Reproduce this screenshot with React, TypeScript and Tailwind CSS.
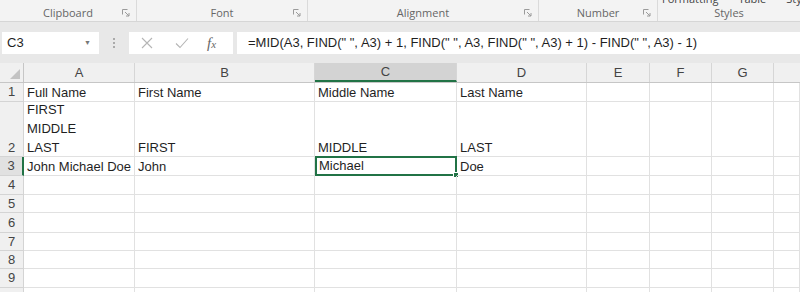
import React from "react";

const cols = [
  { key: "A", w: 111 },
  { key: "B", w: 180 },
  { key: "C", w: 142 },
  { key: "D", w: 130 },
  { key: "E", w: 63 },
  { key: "F", w: 62 },
  { key: "G", w: 62 },
  { key: "H", w: 26 },
];

const rows: { n: string; h: string; cells: Record<string, React.ReactNode> }[] = [
  { n: "1", h: "h-[19px]", cells: { A: "Full Name", B: "First Name", C: "Middle Name", D: "Last Name" } },
  {
    n: "2",
    h: "h-[55px]",
    cells: {
      A: (
        <span className="flex flex-col gap-[3px]">
          <span>FIRST</span>
          <span>MIDDLE</span>
          <span>LAST</span>
        </span>
      ),
      B: "FIRST",
      C: "MIDDLE",
      D: "LAST",
    },
  },
  { n: "3", h: "h-[19px]", cells: { A: "John Michael Doe", B: "John", C: "Michael", D: "Doe" } },
  { n: "4", h: "h-[19px]", cells: {} },
  { n: "5", h: "h-[18px]", cells: {} },
  { n: "6", h: "h-[20px]", cells: {} },
  { n: "7", h: "h-[18px]", cells: {} },
  { n: "8", h: "h-[18px]", cells: {} },
  { n: "9", h: "h-[19px]", cells: {} },
  { n: "10", h: "h-[19px]", cells: {} },
];

function Launcher() {
  return (
    <svg width="8" height="8" viewBox="0 0 8 8" className="text-[#9a9a9a]">
      <path d="M0.5 0.5h5M0.5 0.5v5" stroke="currentColor" fill="none" />
      <path d="M3 3l4 4M4 7h3V4" stroke="currentColor" fill="none" />
    </svg>
  );
}

function RibbonGroup({ label, w }: { label: string; w: string }) {
  return (
    <div className={`${w} relative flex h-full items-end justify-center border-r border-[#dadada]`}>
      <span>{label}</span>
      <span className="absolute bottom-[4px] right-[6px]">
        <Launcher />
      </span>
    </div>
  );
}

export default function App() {
  return (
    <div className="h-[292px] w-[800px] overflow-hidden bg-white text-[13px] text-[#1f1f1f]" style={{ fontFamily: '"Liberation Sans", Arial, sans-serif' }}>
      {/* Ribbon group labels */}
      <div className="relative h-[22px] border-b border-[#d6d6d6] bg-[#f3f3f3] text-[11px] text-[#666]" style={{ fontFamily: '"Open Sans", sans-serif' }}>
        <div className="absolute -top-[9px] left-[662px] flex gap-[20px] text-[11px] text-[#444]">
          <span>Formatting</span>
          <span>Table</span>
          <span>Sty</span>
        </div>
        <div className="flex h-full">
          <RibbonGroup label="Clipboard" w="w-[137px]" />
          <RibbonGroup label="Font" w="w-[171px]" />
          <RibbonGroup label="Alignment" w="w-[231px]" />
          <RibbonGroup label="Number" w="w-[119px]" />
          <div className="flex flex-1 items-end justify-center">Styles</div>
        </div>
      </div>

      {/* Formula bar */}
      <div className="flex h-[41px] items-start bg-[#e8e8e8] pt-[10px]">
        <div className="ml-[2px] flex h-[22px] w-[97px] items-center justify-between bg-white pl-[5px] pr-[8px] text-[13px]">
          <span>C3</span>
          <span className="text-[7px] text-[#777]">▼</span>
        </div>
        <div className="flex w-[30px] flex-col items-center justify-center gap-[2px] pt-[6px]">
          <span className="h-[2px] w-[2px] bg-[#aaa]" />
          <span className="h-[2px] w-[2px] bg-[#aaa]" />
          <span className="h-[2px] w-[2px] bg-[#aaa]" />
        </div>
        <div className="flex h-[22px] w-[104px] items-center bg-white text-[#b5b5b5]">
          <svg width="12" height="12" viewBox="0 0 12 12" className="ml-[12px]">
            <path d="M1 1l10 10M11 1L1 11" stroke="currentColor" strokeWidth="1.1" />
          </svg>
          <svg width="14" height="12" viewBox="0 0 14 12" className="ml-[22px]">
            <path d="M1 6.5l4 4L13 1.5" stroke="currentColor" strokeWidth="1.1" fill="none" />
          </svg>
          <span className="ml-[18px] italic text-[#666]" style={{ fontFamily: '"Liberation Serif", serif' }}>
            <span className="text-[15px]">f</span>
            <span className="text-[11px]">x</span>
          </span>
        </div>
        <div className="ml-[4px] flex h-[22px] flex-1 items-center bg-white pl-[11px] text-[13px]">
          =MID(A3, FIND(" ", A3) + 1, FIND(" ", A3, FIND(" ", A3) + 1) - FIND(" ", A3) - 1)
        </div>
      </div>

      {/* Column headers */}
      <div className="flex h-[20px] border-b border-[#c6c6c6] bg-[#f0f0f0] text-[13px] text-[#444]">
        <div className="relative w-[24px] border-r border-[#c6c6c6]">
          <svg width="10" height="10" viewBox="0 0 10 10" className="absolute bottom-[3px] right-[3px]">
            <path d="M10 0V10H0Z" fill="#c3c3c3" />
          </svg>
        </div>
        {cols.map((c) => (
          <div
            key={c.key}
            className={`flex items-center justify-center ${c.key === "H" ? "" : "border-r border-[#d6d6d6]"} ${
              c.key === "C" ? "border-b-2 border-b-[#217346] bg-[#d3d3d3]" : ""
            }`}
            style={{ width: c.w }}
          >
            {c.key === "H" ? "" : c.key}
          </div>
        ))}
      </div>

      {/* Rows */}
      {rows.map((r) => (
        <div key={r.n} className={`flex ${r.h}`}>
          <div
            className={`flex w-[24px] justify-center border-b leading-[16px] text-[#444] ${
              r.n === "3" ? "border-r-2 border-[#217346] border-b-[#d4d4d4] bg-[#e1e1e1]" : "border-r border-[#d4d4d4] bg-[#f0f0f0]"
            } ${r.n === "2" ? "items-end" : "items-center"}`}
          >
            {r.n}
          </div>
          {cols.map((c) => {
            const selected = r.n === "3" && c.key === "C";
            return (
              <div
                key={c.key}
                className={`relative flex items-end whitespace-nowrap leading-[16px] ${
                  selected ? "-mt-[1px] border-2 border-[#217346] pl-[2px]" : "border-b border-r border-[#e1e1e1] pl-[3px]"
                }`}
                style={{ width: c.w }}
              >
                {r.cells[c.key]}
                {selected && <span className="absolute -bottom-[4px] -right-[4px] h-[6px] w-[6px] border border-white bg-[#217346]" />}
              </div>
            );
          })}
        </div>
      ))}
    </div>
  );
}
